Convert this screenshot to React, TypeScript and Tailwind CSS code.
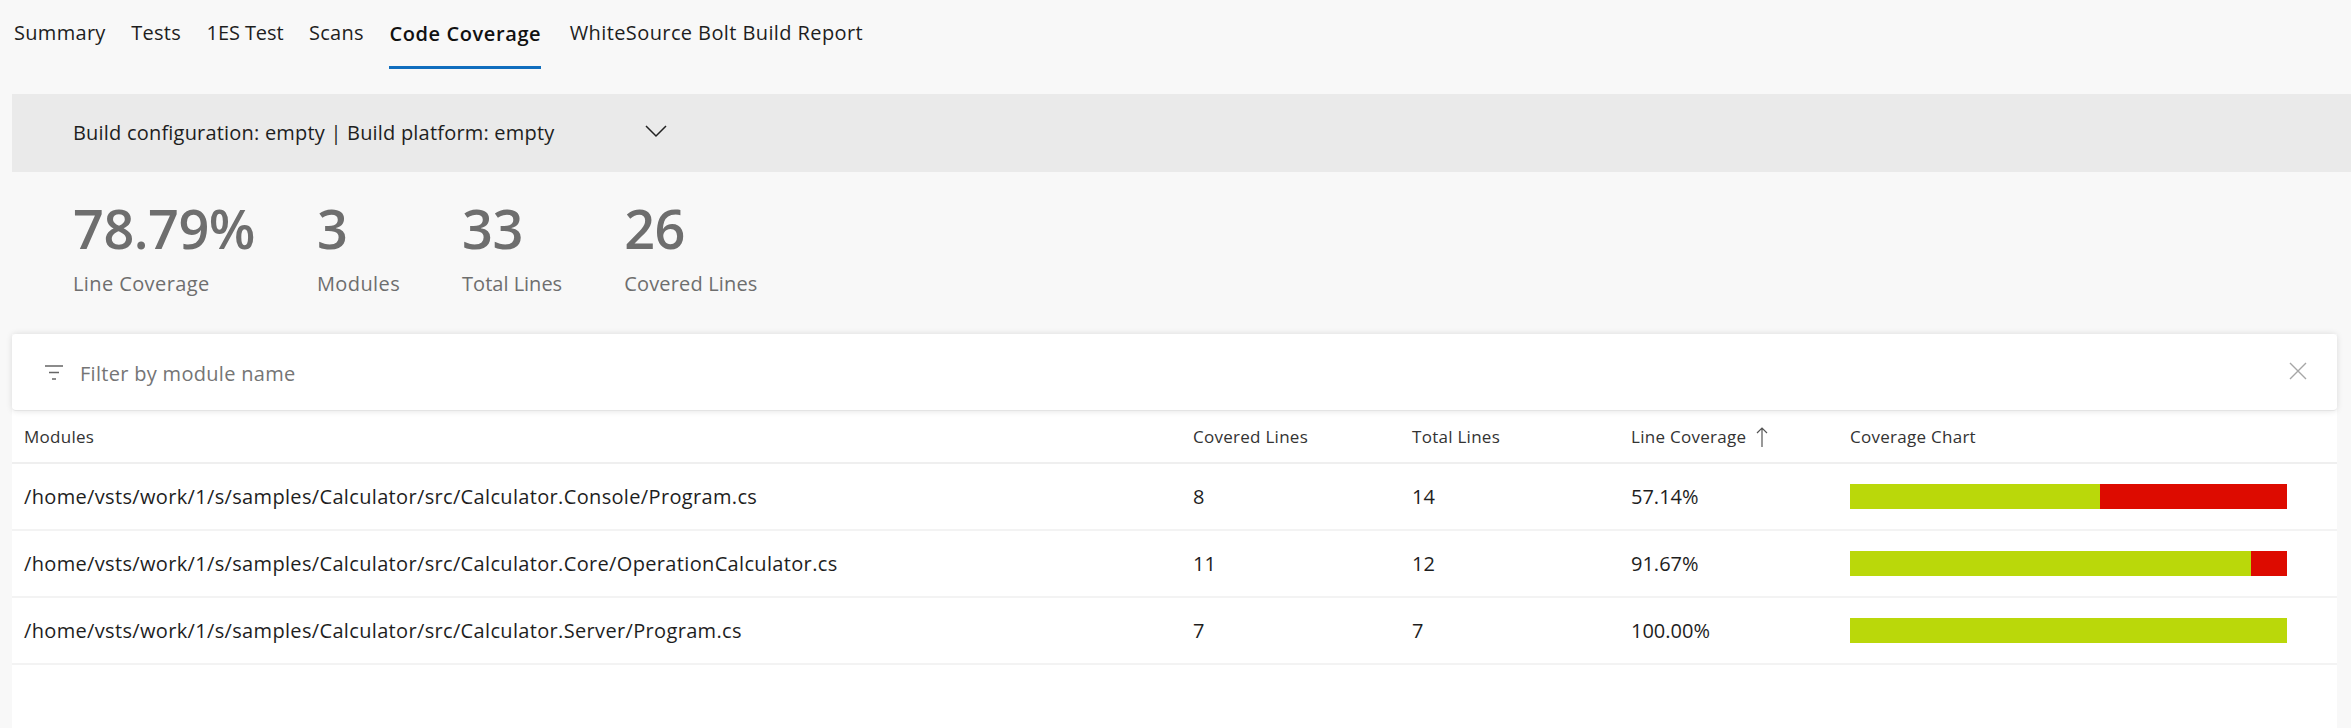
function Bar({ pct }: { pct: number }) {
  return (
    <div className="flex h-[25px] w-[437px] bg-[#dd0b00]">
      <div className="h-full bg-[#bad80a]" style={{ width: `${pct}%` }} />
    </div>
  );
}

const rows = [
  { m: "/home/vsts/work/1/s/samples/Calculator/src/Calculator.Console/Program.cs", c: "8", t: "14", l: "57.14%", p: 57.14 },
  { m: "/home/vsts/work/1/s/samples/Calculator/src/Calculator.Core/OperationCalculator.cs", c: "11", t: "12", l: "91.67%", p: 91.67 },
  { m: "/home/vsts/work/1/s/samples/Calculator/src/Calculator.Server/Program.cs", c: "7", t: "7", l: "100.00%", p: 100 },
];

const stats = [
  { v: "78.79%", l: "Line Coverage", c: "tracking-[0.4px]" },
  { v: "3", l: "Modules", c: "tracking-[0.4px]" },
  { v: "33", l: "Total Lines", c: "tracking-[0px]" },
  { v: "26", l: "Covered Lines", c: "tracking-[0.17px]" },
];

const tabs = [
  { t: "Summary", c: "flex h-[66px] items-center tracking-[0.3px]" },
  { t: "Tests", c: "flex h-[66px] items-center tracking-[0.3px]" },
  { t: "1ES Test", c: "flex h-[66px] items-center tracking-[-0.1px]" },
  { t: "Scans", c: "flex h-[66px] items-center tracking-[0.3px]" },
  {
    t: "Code Coverage",
    c: "mr-[3px] flex h-[69px] items-center border-b-[3px] border-[#106ebe] pt-[1px] font-semibold tracking-[0.6px] text-[#111]",
  },
  { t: "WhiteSource Bolt Build Report", c: "flex h-[66px] items-center tracking-[0.4px]" },
];

export default function App() {
  return (
    <div className="h-[728px] w-[2351px] overflow-hidden bg-[#f8f8f8] font-['Open_Sans',sans-serif] text-[#1e1e1e]">
      <div className="flex h-[69px] items-start gap-[25.5px] pl-[14px] text-[20px]">
        {tabs.map((x) => (
          <div key={x.t} className={x.c}>
            {x.t}
          </div>
        ))}
      </div>
      <div className="ml-[12px] mt-[25px] flex h-[78px] items-center bg-[#eaeaea] pl-[61px] text-[20px] tracking-[0.2px]">
        <span className="w-[571px]">Build configuration: empty | Build platform: empty</span>
        <svg className="-mt-[5px]" width="24" height="16" viewBox="0 0 24 16" fill="none" stroke="#222" strokeWidth="1.5">
          <path d="M2 3l10 10L22 3" />
        </svg>
      </div>
      <div className="ml-[73px] flex h-[162px] gap-[62px] pt-[22px] text-[#6e6e6e]">
        {stats.map((s) => (
          <div key={s.l} className="flex flex-col">
            <div className="text-[54px] font-semibold leading-[68px] tracking-[-0.5px]">{s.v}</div>
            <div className={`mt-[6px] text-[20px] leading-[32px] ${s.c}`}>{s.l}</div>
          </div>
        ))}
      </div>
      <div className="ml-[12px] mr-[14px] h-[394px] bg-white">
        <div className="flex h-[77px] items-center justify-between rounded-[4px] border-b border-[#e4e4e4] pl-[33px] pr-[30px] shadow-[0_0_6px_rgba(0,0,0,0.12)]">
          <div className="mt-[4px] flex items-center gap-[17px] text-[20px] tracking-[0.3px] text-[#757575]">
            <svg className="-mt-[3px]" width="18" height="15" viewBox="0 0 18 15" fill="none" stroke="#666" strokeWidth="1.5">
              <path d="M0 1h18M4 7.5h10M7 14h4" />
            </svg>
            Filter by module name
          </div>
          <svg className="-mt-[2px]" width="18" height="18" viewBox="0 0 18 18" fill="none" stroke="#a6a6a6" strokeWidth="1.4">
            <path d="M1 1l16 16M17 1L1 17" />
          </svg>
        </div>
        <div className="flex h-[53px] items-center border-b-2 border-[#efefef] pl-[12px] text-[17px] tracking-[0.27px] text-[#333]">
          <div className="w-[1169px]">Modules</div>
          <div className="w-[219px]">Covered Lines</div>
          <div className="w-[219px]">Total Lines</div>
          <div className="flex w-[219px] items-center gap-[10px]">
            Line Coverage
            <svg width="12" height="20" viewBox="0 0 12 20" fill="none" stroke="#555" strokeWidth="1.2">
              <path d="M6 20V1M1 6l5-5 5 5" />
            </svg>
          </div>
          <div>Coverage Chart</div>
        </div>
        {rows.map((r) => (
          <div key={r.m} className="flex h-[67px] items-center border-b-2 border-[#f3f3f3] pl-[12px] text-[20px]">
            <div className="w-[1169px] tracking-[0.34px]">{r.m}</div>
            <div className="w-[219px]">{r.c}</div>
            <div className="w-[219px]">{r.t}</div>
            <div className="w-[219px]">{r.l}</div>
            <div className="-mt-[1px]">
              <Bar pct={r.p} />
            </div>
          </div>
        ))}
      </div>
    </div>
  );
}
